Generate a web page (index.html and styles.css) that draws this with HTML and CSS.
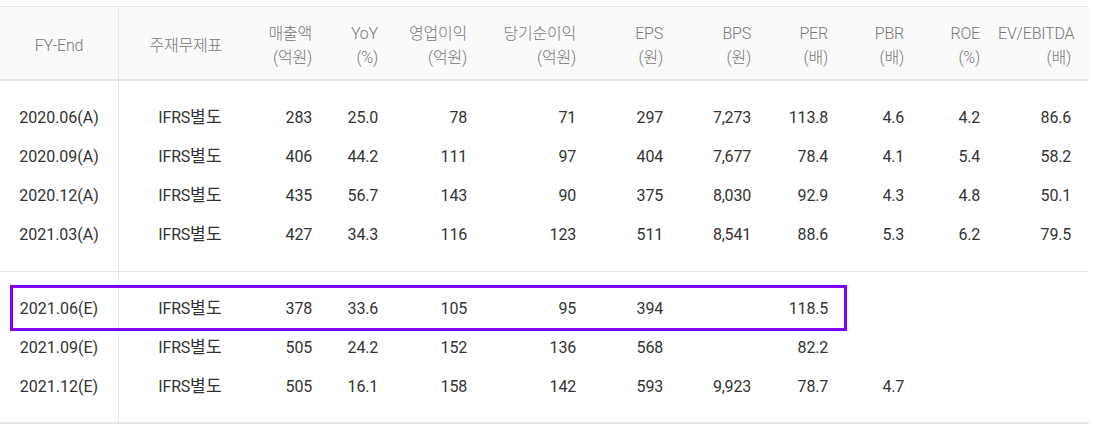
FILE: index.html
```html
<!DOCTYPE html>
<html lang="ko">
<head>
<meta charset="utf-8">
<title>재무 요약</title>
<link rel="stylesheet" href="styles.css">
</head>
<body>
<div class="wrap">
  <table class="fin">
    <colgroup>
      <col class="c1"><col class="c2"><col class="c3"><col class="c4"><col class="c5"><col class="c6">
      <col class="c7"><col class="c8"><col class="c9"><col class="c10"><col class="c11"><col class="c12">
    </colgroup>
    <thead>
      <tr>
        <th class="first">FY-End</th>
        <th>주재무제표</th>
        <th><span class="l">매출액</span><span class="l">(억원)</span></th>
        <th><span class="l">YoY</span><span class="l">(%)</span></th>
        <th><span class="l">영업이익</span><span class="l">(억원)</span></th>
        <th><span class="l">당기순이익</span><span class="l">(억원)</span></th>
        <th><span class="l">EPS</span><span class="l">(원)</span></th>
        <th><span class="l">BPS</span><span class="l">(원)</span></th>
        <th><span class="l">PER</span><span class="l">(배)</span></th>
        <th><span class="l">PBR</span><span class="l">(배)</span></th>
        <th><span class="l">ROE</span><span class="l">(%)</span></th>
        <th><span class="l">EV/EBITDA</span><span class="l">(배)</span></th>
      </tr>
    </thead>
    <tbody class="g1">
      <tr class="top"><td class="first">2020.06(A)</td><td>IFRS<span class="ko">별도</span></td><td>283</td><td>25.0</td><td>78</td><td>71</td><td>297</td><td>7,273</td><td>113.8</td><td>4.6</td><td>4.2</td><td>86.6</td></tr>
      <tr><td class="first">2020.09(A)</td><td>IFRS<span class="ko">별도</span></td><td>406</td><td>44.2</td><td>111</td><td>97</td><td>404</td><td>7,677</td><td>78.4</td><td>4.1</td><td>5.4</td><td>58.2</td></tr>
      <tr><td class="first">2020.12(A)</td><td>IFRS<span class="ko">별도</span></td><td>435</td><td>56.7</td><td>143</td><td>90</td><td>375</td><td>8,030</td><td>92.9</td><td>4.3</td><td>4.8</td><td>50.1</td></tr>
      <tr class="bot"><td class="first">2021.03(A)</td><td>IFRS<span class="ko">별도</span></td><td>427</td><td>34.3</td><td>116</td><td>123</td><td>511</td><td>8,541</td><td>88.6</td><td>5.3</td><td>6.2</td><td>79.5</td></tr>
    </tbody>
    <tbody class="g2">
      <tr class="top"><td class="first">2021.06(E)</td><td>IFRS<span class="ko">별도</span></td><td>378</td><td>33.6</td><td>105</td><td>95</td><td>394</td><td></td><td>118.5</td><td></td><td></td><td></td></tr>
      <tr><td class="first">2021.09(E)</td><td>IFRS<span class="ko">별도</span></td><td>505</td><td>24.2</td><td>152</td><td>136</td><td>568</td><td></td><td>82.2</td><td></td><td></td><td></td></tr>
      <tr class="bot"><td class="first">2021.12(E)</td><td>IFRS<span class="ko">별도</span></td><td>505</td><td>16.1</td><td>158</td><td>142</td><td>593</td><td>9,923</td><td>78.7</td><td>4.7</td><td></td><td></td></tr>
    </tbody>
  </table>
  <div class="highlight"></div>
</div>
</body>
</html>
```

FILE: styles.css
```css
html, body {
  margin: 0;
  padding: 0;
  background: #ffffff;
}

body {
  font-family: Roboto, "Noto Sans CJK KR", sans-serif;
  color: #333333;
}

.wrap {
  position: relative;
  padding-top: 6px;
  width: 1089px;
}

.fin {
  border-collapse: separate;
  border-spacing: 0;
  table-layout: fixed;
  width: 1089px;
}

.c1 { width: 119px; }
.c2 { width: 121px; }
.c3 { width: 90px; }
.c4 { width: 66px; }
.c5 { width: 89px; }
.c6 { width: 109px; }
.c7 { width: 87px; }
.c8 { width: 88px; }
.c9 { width: 77px; }
.c10 { width: 76px; }
.c11 { width: 76px; }
.c12 { width: 91px; }

.fin th {
  background: #fafafa;
  border-top: 1px solid #e8e8e8;
  border-bottom: 2px solid #e4e4ea;
  padding: 15px 18px 9px 0;
  height: 48px;
  font-weight: 300;
  font-size: 16px;
  line-height: 24px;
  color: #777777;
  text-align: right;
  vertical-align: middle;
  white-space: nowrap;
  letter-spacing: -0.2px;
}

.fin th .l {
  display: block;
}

.fin td {
  padding: 0 18px 0 0;
  height: 39px;
  box-sizing: content-box;
  font-size: 16px;
  line-height: 39px;
  text-align: right;
  white-space: nowrap;
  vertical-align: middle;
  color: #333333;
  letter-spacing: -0.2px;
  overflow: hidden;
}

.fin td .ko {
  font-size: 17px;
  line-height: 1;
  letter-spacing: 0.3px;
}

.fin .first {
  text-align: center;
  padding-right: 0;
  border-right: 1px solid #e6e6e6;
}

.fin td.first {
  letter-spacing: 0;
}

.fin tr.top td {
  padding-top: 17px;
}

.g1 tr.bot td {
  padding-bottom: 17px;
}

.g2 tr.top td {
  border-top: 1px solid #e8e8e8;
}

.g2 tr.bot td {
  padding-bottom: 16px;
  border-bottom: 2px solid #e4e4ea;
}

.highlight {
  position: absolute;
  left: 10px;
  top: 285px;
  width: 837px;
  height: 46px;
  box-sizing: border-box;
  border: 3px solid #8000ff;
  pointer-events: none;
}
```
